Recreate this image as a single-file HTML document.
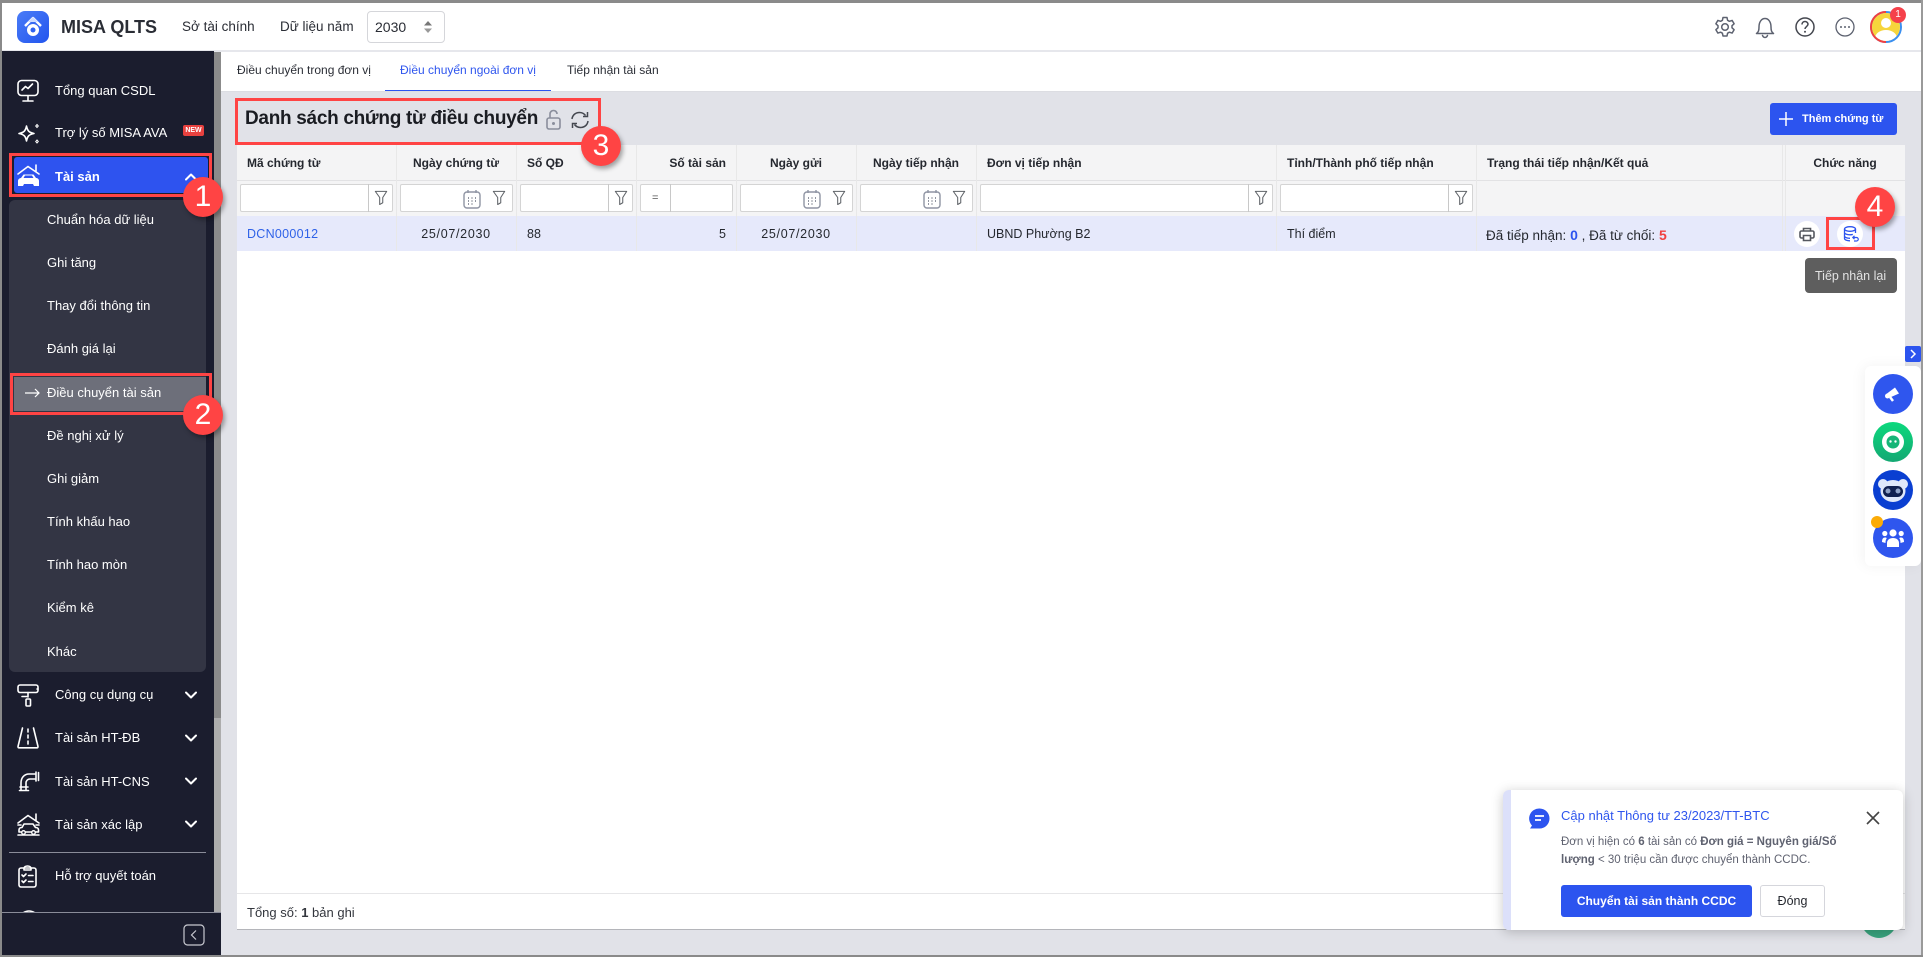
<!DOCTYPE html>
<html lang="vi"><head><meta charset="utf-8"><title>MISA QLTS</title>
<style>
html,body{margin:0;padding:0}
body{width:1923px;height:957px;position:relative;overflow:hidden;background:#e1e2e8;font-family:"Liberation Sans",sans-serif;font-size:13px;color:#1f2229}
.a{position:absolute}
.t{position:absolute;white-space:nowrap;line-height:20px;height:20px}
.r{background:#fff;position:absolute}
.m{color:#fff;font-size:13px;left:55px}
.s{color:#fff;font-size:13px;left:47px}
.h{font-weight:bold;font-size:12px;top:153px;color:#25282f}
.c{text-align:center;transform:translateX(-50%)}
.d{top:224px;font-size:12.5px;color:#25282f}
.in{position:absolute;top:184px;height:28px;background:#fff;border:1px solid #d4d4d4;box-sizing:border-box;border-radius:2px}
.dv{position:absolute;top:184px;height:28px;width:1px;background:#c8c8c8}
.v{position:absolute;top:145px;height:106px;width:1px;background:#e8e8e8}
.bd{position:absolute;width:40px;height:40px;border-radius:50%;background:#ff4444;color:#fff;font-size:30px;line-height:40px;text-align:center;box-shadow:2px 3px 5px rgba(0,0,0,.35);z-index:9}
.rb{position:absolute;border:3px solid #ff4444;box-sizing:border-box;z-index:8}
svg{position:absolute;overflow:visible}
.w{fill:none;stroke:#fff;stroke-width:1.6;stroke-linecap:round;stroke-linejoin:round}
.g{fill:none;stroke:#5d6270;stroke-width:1.5;stroke-linecap:round;stroke-linejoin:round}
</style></head><body>
<svg width="0" height="0" style="position:absolute"><defs>
<symbol id="fn" viewBox="0 0 16 18"><path d="M1.5 2h13L10 9v6l-3.500 2V9z" fill="none" stroke="#5f6368" stroke-width="1.200" stroke-linejoin="round"/></symbol>
<symbol id="cal" viewBox="0 0 18 20"><rect x="1" y="3" width="16" height="16" rx="3" fill="none" stroke="#8f94a3" stroke-width="1.400"/><path d="M5 1v3M13 1v3" stroke="#8f94a3" stroke-width="1.400"/><path d="M5 9h1M8.500 9h1M12 9h1M5 12h1M8.500 12h1M12 12h1M5 15h1M8.500 15h1" stroke="#6f7483" stroke-width="1.400"/></symbol>
<symbol id="chev" viewBox="0 0 12 8"><path d="M1 1.500L6 6.500L11 1.500" fill="none" stroke="#fff" stroke-width="2" stroke-linecap="round" stroke-linejoin="round"/></symbol>
</defs></svg>

<!-- frame -->
<div class="a" style="left:0;top:0;width:1923px;height:3px;background:#8a8a8a;z-index:20"></div>
<div class="a" style="left:0;top:0;width:2px;height:957px;background:#8a8a8a;z-index:20"></div>
<div class="a" style="left:1921px;top:0;width:2px;height:957px;background:#9a9a9a;z-index:20"></div>
<div class="a" style="left:0;top:955px;width:1923px;height:2px;background:#8a8a8a;z-index:20"></div>

<!-- header -->
<div class="r" style="left:2px;top:3px;width:1919px;height:48px"></div>
<div class="a" style="left:2px;top:50px;width:1919px;height:2px;background:#e6e7ec"></div>
<div class="a" style="left:17px;top:11px;width:32px;height:32px;border-radius:8px;background:linear-gradient(135deg,#4a7cf7,#2255ee)"></div>
<svg style="left:17px;top:11px" width="32" height="32" viewBox="0 0 32 32"><path d="M8 15l8-8 8 8" fill="none" stroke="#fff" stroke-width="2.400" stroke-linejoin="round"/><circle cx="16" cy="19" r="6" fill="#fff"/><circle cx="16" cy="19" r="2.500" fill="#2f62f0"/><path d="M11 11l5-5 5 5" fill="#cfdcff"/></svg>
<div class="t" style="left:61px;top:17px;font-size:18px;font-weight:bold;color:#2a2d35">MISA QLTS</div>
<div class="t" style="left:182px;top:17px;font-size:13.500px;color:#2a2d35">Sở tài chính</div>
<div class="t" style="left:280px;top:17px;font-size:13.500px;color:#2a2d35">Dữ liệu năm</div>
<div class="a" style="left:367px;top:11px;width:78px;height:32px;border:1px solid #d5d6da;border-radius:4px;box-sizing:border-box;background:#fff"></div>
<div class="t" style="left:375px;top:17px;font-size:14px;color:#2a2d35">2030</div>
<svg style="left:423px;top:20px" width="10" height="14" viewBox="0 0 10 14"><path d="M1 5.500L5 1l4 4.500z" fill="#777"/><path d="M1 8.500L5 13l4-4.500z" fill="#999"/></svg>

<svg style="left:1714px;top:16px" width="22" height="22" viewBox="0 0 22 22"><path class="g" d="M9 1.500h4l.6 2.800 1.800 1 2.700-.9 2 3.400-2.100 1.900v2.100l2.100 1.900-2 3.400-2.700-.9-1.800 1-.6 2.800H9l-.6-2.800-1.800-1-2.700.9-2-3.400 2.100-1.900V9.700L1.900 7.800l2-3.400 2.700.9 1.800-1z"/><circle class="g" cx="11" cy="11" r="3.300"/></svg>
<svg style="left:1755px;top:15px" width="20" height="24" viewBox="0 0 20 24"><path class="g" d="M1.500 18.500c2-1.500 2.500-3 2.500-6.500 0-5 2.500-8.500 6-8.500s6 3.500 6 8.500c0 3.500.5 5 2.500 6.500z"/><path class="g" d="M7.500 20.500c.6 1.400 1.400 2 2.500 2s1.900-.6 2.500-2"/></svg>
<svg style="left:1795px;top:17px" width="20" height="20" viewBox="0 0 20 20"><circle cx="10" cy="10" r="9" fill="none" stroke="#44474f" stroke-width="1.500"/><path d="M7 7.500c0-1.800 1.400-3 3-3s3 1.200 3 2.800c0 2.200-3 2.400-3 4.700" fill="none" stroke="#44474f" stroke-width="1.500"/><circle cx="10" cy="14.800" r="1" fill="#44474f"/></svg>
<svg style="left:1835px;top:17px" width="20" height="20" viewBox="0 0 20 20"><circle cx="10" cy="10" r="9" fill="none" stroke="#5d6270" stroke-width="1.300"/><circle cx="6" cy="10" r="1" fill="#5d6270"/><circle cx="10" cy="10" r="1" fill="#5d6270"/><circle cx="14" cy="10" r="1" fill="#5d6270"/></svg>
<svg style="left:1870px;top:11px" width="32" height="32" viewBox="0 0 32 32"><defs><clipPath id="av"><circle cx="16" cy="16" r="14"/></clipPath></defs><circle cx="16" cy="16" r="15" fill="none" stroke="#3a8ff0" stroke-width="2"/><path d="M16 1A15 15 0 0 0 16 31" fill="none" stroke="#f04040" stroke-width="2"/><circle cx="16" cy="16" r="14" fill="#f6d53c"/><g clip-path="url(#av)"><circle cx="16" cy="12" r="5" fill="#fff"/><ellipse cx="16" cy="27" rx="11" ry="8" fill="#fff"/></g></svg>
<div class="a" style="left:1890px;top:7px;width:16px;height:16px;border-radius:50%;background:#f5404a;color:#fff;font-size:10px;line-height:16px;text-align:center;z-index:3">1</div>

<!-- tabs -->
<div class="r" style="left:221px;top:52px;width:1700px;height:40px"></div>
<div class="t" style="left:237px;top:60px;font-size:12px;color:#2a2d35">Điều chuyển trong đơn vị</div>
<div class="t" style="left:400px;top:60px;font-size:12px;color:#2f56ee">Điều chuyển ngoài đơn vị</div>
<div class="t" style="left:567px;top:60px;font-size:12px;color:#2a2d35">Tiếp nhận tài sản</div>
<div class="a" style="left:385px;top:90px;width:166px;height:2px;background:#2c54ef"></div>
<div class="a" style="left:221px;top:91px;width:1700px;height:1px;background:#dcdde2"></div>

<!-- title -->
<div class="t" style="left:245px;top:109px;font-size:19px;letter-spacing:-.3px;font-weight:bold;color:#1a1c22">Danh sách chứng từ điều chuyển</div>
<svg style="left:546px;top:109px" width="15" height="22" viewBox="0 0 15 22"><rect x="1" y="9" width="13" height="11" rx="2" fill="none" stroke="#8a8e9c" stroke-width="1.600"/><path d="M4 9V5c0-2 1.500-3.500 3.500-3.500S11 3 11 5" fill="none" stroke="#8a8e9c" stroke-width="1.600"/><circle cx="7.500" cy="14.500" r="1.500" fill="#8a8e9c"/></svg>
<svg style="left:570px;top:110px" width="20" height="20" viewBox="0 0 20 20"><path d="M2 9c.5-4 3.500-6.500 7.500-6.500 2.500 0 4.500 1 6 3M18 11c-.5 4-3.500 6.500-7.500 6.500-2.500 0-4.500-1-6-3" fill="none" stroke="#44474f" stroke-width="1.500"/><path d="M13 6.500h4.500V2" fill="none" stroke="#44474f" stroke-width="1.500"/><path d="M7 13.500H2.500V18" fill="none" stroke="#44474f" stroke-width="1.500"/></svg>
<div class="a" style="left:1770px;top:103px;width:127px;height:32px;background:#2c54ef;border-radius:3px"></div>
<svg style="left:1779px;top:112px" width="14" height="14" viewBox="0 0 14 14"><path d="M7 0v14M0 7h14" stroke="#fff" stroke-width="1.500"/></svg>
<div class="t" style="left:1802px;top:109px;font-size:11px;font-weight:bold;color:#fff">Thêm chứng từ</div>

<!-- table -->
<div class="r" style="left:237px;top:145px;width:1668px;height:748px"></div>
<div class="a" style="left:237px;top:145px;width:1668px;height:71px;background:#f4f4f5"></div>
<div class="a" style="left:237px;top:180px;width:1668px;height:1px;background:#e2e2e4"></div>
<div class="a" style="left:237px;top:216px;width:1668px;height:35px;background:#e6e9fb"></div>
<div class="v" style="left:396px"></div><div class="v" style="left:516px"></div><div class="v" style="left:636px"></div><div class="v" style="left:736px"></div><div class="v" style="left:856px"></div><div class="v" style="left:976px"></div><div class="v" style="left:1276px"></div><div class="v" style="left:1476px"></div><div class="v" style="left:1782px"></div><div class="v" style="left:1785px"></div>

<div class="t h" style="left:247px">Mã chứng từ</div>
<div class="t h c" style="left:456px">Ngày chứng từ</div>
<div class="t h" style="left:527px">Số QĐ</div>
<div class="t h" style="right:1197px">Số tài sản</div>
<div class="t h c" style="left:796px">Ngày gửi</div>
<div class="t h c" style="left:916px">Ngày tiếp nhận</div>
<div class="t h" style="left:987px">Đơn vị tiếp nhận</div>
<div class="t h" style="left:1287px">Tỉnh/Thành phố tiếp nhận</div>
<div class="t h" style="left:1487px">Trạng thái tiếp nhận/Kết quả</div>
<div class="t h c" style="left:1845px">Chức năng</div>

<div class="in" style="left:240px;width:153px"></div><div class="dv" style="left:368px"></div>
<div class="in" style="left:400px;width:113px"></div>
<div class="in" style="left:520px;width:113px"></div><div class="dv" style="left:608px"></div>
<div class="in" style="left:640px;width:93px"></div><div class="dv" style="left:670px"></div>
<div class="in" style="left:740px;width:113px"></div>
<div class="in" style="left:860px;width:113px"></div>
<div class="in" style="left:980px;width:293px"></div><div class="dv" style="left:1248px"></div>
<div class="in" style="left:1280px;width:193px"></div><div class="dv" style="left:1448px"></div>
<div class="t" style="left:652px;top:188px;font-size:11px;color:#555">=</div>
<svg style="left:374px;top:189px" width="14" height="17"><use href="#fn"/></svg>
<svg style="left:492px;top:189px" width="14" height="17"><use href="#fn"/></svg>
<svg style="left:614px;top:189px" width="14" height="17"><use href="#fn"/></svg>
<svg style="left:832px;top:189px" width="14" height="17"><use href="#fn"/></svg>
<svg style="left:952px;top:189px" width="14" height="17"><use href="#fn"/></svg>
<svg style="left:1254px;top:189px" width="14" height="17"><use href="#fn"/></svg>
<svg style="left:1454px;top:189px" width="14" height="17"><use href="#fn"/></svg>
<svg style="left:463px;top:189px" width="18" height="20"><use href="#cal"/></svg>
<svg style="left:803px;top:189px" width="18" height="20"><use href="#cal"/></svg>
<svg style="left:923px;top:189px" width="18" height="20"><use href="#cal"/></svg>

<div class="t d" style="left:247px;color:#2f62e8;letter-spacing:.28px">DCN000012</div>
<div class="t d c" style="left:456px;letter-spacing:.7px">25/07/2030</div>
<div class="t d" style="left:527px">88</div>
<div class="t d" style="right:1197px">5</div>
<div class="t d c" style="left:796px;letter-spacing:.7px">25/07/2030</div>
<div class="t d" style="left:987px">UBND Phường B2</div>
<div class="t d" style="left:1287px">Thí điểm</div>
<div class="t d" style="left:1486px;top:225px;font-size:13.500px">Đã tiếp nhận: <b style="color:#2c54ef;font-size:14px">0</b> , Đã từ chối: <b style="color:#f04040;font-size:14px">5</b></div>
<div class="a" style="left:1794px;top:221px;width:26px;height:26px;border-radius:50%;background:#fff"></div>
<div class="a" style="left:1837px;top:221px;width:26px;height:26px;border-radius:50%;background:#fff"></div>
<svg style="left:1799px;top:226px" width="16" height="16" viewBox="0 0 16 16"><path d="M4.500 5V2.500h7V5M4 12H2.500A1.500 1.500 0 0 1 1 10.500v-4A1.500 1.500 0 0 1 2.500 5h11A1.500 1.500 0 0 1 15 6.500v4a1.500 1.500 0 0 1-1.500 1.500H12" fill="none" stroke="#55585f" stroke-width="1.600"/><path d="M4.500 9.500h7v5h-7z" fill="none" stroke="#55585f" stroke-width="1.600"/></svg>
<svg style="left:1843px;top:226px" width="16" height="16" viewBox="0 0 16 16"><ellipse cx="7" cy="3" rx="5.500" ry="2.300" fill="none" stroke="#2c54ef" stroke-width="1.300"/><path d="M1.500 3v9.500c0 1.300 2.400 2.300 5.500 2.300M12.500 3v4M1.500 6.500c0 1.300 2.400 2.300 5.500 2.300 1 0 2-.1 2.800-.4M1.500 10c0 1.300 2.400 2.300 5.500 2.300" fill="none" stroke="#2c54ef" stroke-width="1.300"/><path d="M10 11.500h3.500a1.500 1.500 0 0 1 0 3.500H11M11.500 9.800L9.800 11.500l1.700 1.700" fill="none" stroke="#2c54ef" stroke-width="1.200"/></svg>
<div class="a" style="left:1805px;top:258px;width:92px;height:35px;background:#5e5e5e;border-radius:4px"></div>
<div class="t" style="left:1815px;top:266px;font-size:12.500px;color:#e2e2e2">Tiếp nhận lại</div>

<div class="a" style="left:237px;top:893px;width:1668px;height:1px;background:#e6e6e8"></div>
<div class="a" style="left:237px;top:929px;width:1668px;height:1px;background:#b4b5ba"></div>
<div class="r" style="left:237px;top:894px;width:1668px;height:35px"></div>
<div class="t" style="left:247px;top:903px;font-size:13px;color:#33363d">Tổng số: <b>1</b> bản ghi</div>

<!-- sidebar -->
<div class="a" style="left:2px;top:51px;width:212px;height:904px;background:#1b1d2e"></div>
<div class="a" style="left:214px;top:52px;width:7px;height:666px;background:#8b8b8b"></div>
<div class="a" style="left:214px;top:718px;width:7px;height:194px;background:#adadad"></div>
<div class="a" style="left:214px;top:912px;width:7px;height:43px;background:#1b1d2e"></div>
<div class="a" style="left:9px;top:200px;width:197px;height:472px;border-radius:6px;background:#333544"></div>
<div class="a" style="left:14px;top:157px;width:194px;height:36px;background:#2e53ef;border-radius:3px"></div>
<div class="a" style="left:14px;top:377px;width:192px;height:34px;background:#6d6f7a"></div>
<div class="a" style="left:9px;top:852px;width:197px;height:1px;background:#8a8c99"></div>

<svg style="left:17px;top:79px" width="22" height="24" viewBox="0 0 22 24"><rect class="w" x="1" y="1.500" width="20" height="15" rx="3.500"/><path class="w" d="M5 11l3.500-3.500 2.500 2 4.500-4.500M11 17v4M6 22h10"/></svg>
<svg style="left:17px;top:122px" width="26" height="24" viewBox="0 0 26 24"><path class="w" d="M9.500 4C10.500 9 12 10.500 17 11.500 12 12.500 10.500 14 9.500 19 8.500 14 7 12.500 2 11.500 7 10.500 8.500 9 9.500 4z"/><path d="M20 2.500l1.300 1.500-1.300 1.500-1.300-1.500zM20 18l1.300 1.500-1.300 1.500-1.300-1.500z" fill="none" stroke="#fff" stroke-width="1"/></svg>
<svg style="left:17px;top:164px" width="24" height="24" viewBox="0 0 24 24"><path class="w" d="M1 10L11 2.500 22 10M19 1v6"/><path d="M1 22v-5c0-2 2-3 3-3l2.500-3.500h10L19 14c1.500 0 3 1 3 3v5h-5l-1-2H7l-1 2z" fill="#fff"/><path d="M8 11.500h7l1.500 2.500h-10z" fill="#2e53ef"/></svg>
<svg style="left:17px;top:684px" width="22" height="24" viewBox="0 0 22 24"><rect class="w" x="1" y="1" width="20" height="7.500" rx="2"/><path class="w" d="M21 5h-1M11 8.500V13M5 12.500h6"/><rect class="w" x="9" y="15" width="4.500" height="7" rx="1"/></svg>
<svg style="left:17px;top:727px" width="22" height="22" viewBox="0 0 22 22"><path class="w" d="M5.500 1L1 19.500c0 .8.400 1.300 1 1.300h18c.600 0 1-.5 1-1.300L16.500 1M11 2v3M11 8v3M11 14v3"/></svg>
<svg style="left:18px;top:770px" width="22" height="22" viewBox="0 0 22 22"><path class="w" d="M3 20v-7c0-5 3-9 8-9h6M8 20v-7c0-2 1.500-4 4-4h5M18 2v9M20.500 2.500v8M1.500 20.500h9M2 17h8"/></svg>
<svg style="left:17px;top:813px" width="24" height="24" viewBox="0 0 24 24"><path class="w" d="M1 10L11 2.500 22 10M19 1v6M1 22h21M1 12h3M19 12h3"/><path class="w" d="M2 19v-2c0-1.500 1-2.500 3-2.500L7 11h9l2.500 3.500c2 0 3 1 3 2.500v2H2z"/><circle cx="6.500" cy="19.500" r="1.800" fill="#1b1d2e" stroke="#fff" stroke-width="1.300"/><circle cx="16.500" cy="19.500" r="1.800" fill="#1b1d2e" stroke="#fff" stroke-width="1.300"/></svg>
<svg style="left:18px;top:865px" width="20" height="23" viewBox="0 0 20 23"><rect class="w" x="1" y="3" width="17" height="19" rx="2"/><path class="w" d="M6 3.500c0-1.500 1.500-2.500 3.500-2.500s3.500 1 3.500 2.500V5H6zM4 10l1.500 1.500L8 9M4 16l1.500 1.500L8 15M10.500 10.500H15M10.500 16.500H15"/></svg>

<div class="t m" style="top:81px">Tổng quan CSDL</div>
<div class="t m" style="top:123px">Trợ lý số MISA AVA</div>
<div class="a" style="left:183px;top:125px;width:21px;height:11px;background:#e8413f;border-radius:2px;color:#fff;font-size:7px;font-weight:bold;line-height:11px;text-align:center">NEW</div>
<div class="t m" style="top:167px;font-weight:bold">Tài sản</div>
<svg style="left:185px;top:173px;transform:rotate(180deg)" width="12" height="8"><use href="#chev"/></svg>
<div class="t s" style="top:210px">Chuẩn hóa dữ liệu</div>
<div class="t s" style="top:253px">Ghi tăng</div>
<div class="t s" style="top:296px">Thay đổi thông tin</div>
<div class="t s" style="top:339px">Đánh giá lại</div>
<svg style="left:25px;top:387px" width="15" height="12" viewBox="0 0 15 12"><path d="M0 6h14M10 2l4 4-4 4" fill="none" stroke="#fff" stroke-width="1.200"/></svg>
<div class="t s" style="top:383px">Điều chuyển tài sản</div>
<div class="t s" style="top:426px">Đề nghị xử lý</div>
<div class="t s" style="top:469px">Ghi giảm</div>
<div class="t s" style="top:512px">Tính khấu hao</div>
<div class="t s" style="top:555px">Tính hao mòn</div>
<div class="t s" style="top:598px">Kiểm kê</div>
<div class="t s" style="top:642px">Khác</div>
<div class="t m" style="top:685px">Công cụ dụng cụ</div>
<svg style="left:185px;top:691px" width="12" height="8"><use href="#chev"/></svg>
<div class="t m" style="top:728px">Tài sản HT-ĐB</div>
<svg style="left:185px;top:734px" width="12" height="8"><use href="#chev"/></svg>
<div class="t m" style="top:772px">Tài sản HT-CNS</div>
<svg style="left:185px;top:777px" width="12" height="8"><use href="#chev"/></svg>
<div class="t m" style="top:815px">Tài sản xác lập</div>
<svg style="left:185px;top:820px" width="12" height="8"><use href="#chev"/></svg>
<div class="t m" style="top:866px">Hỗ trợ quyết toán</div>
<div class="a" style="left:2px;top:895px;width:212px;height:17px;overflow:hidden">
  <div class="t m" style="left:53px;top:13px">Công cụ CCDC-TSC</div>
  <svg style="left:16px;top:14px" width="24" height="10" viewBox="0 0 24 10"><path class="w" d="M1 8c3-4 6-6 10-6s7 2 10 6"/></svg>
</div>
<div class="a" style="left:2px;top:912px;width:219px;height:1px;background:#8a8c99"></div>
<svg style="left:183px;top:924px" width="22" height="22" viewBox="0 0 22 22"><rect x="1" y="1" width="20" height="20" rx="3.500" fill="none" stroke="#c8c9d0" stroke-width="1.200"/><path d="M13 6.500L8.500 11l4.500 4.500" fill="none" stroke="#c8c9d0" stroke-width="1.200"/></svg>

<!-- right panel -->
<div class="a" style="left:1905px;top:346px;width:16px;height:16px;background:#2c54ef;border-radius:2px"></div>
<svg style="left:1909px;top:349px" width="8" height="10" viewBox="0 0 8 10"><path d="M2 1l4 4-4 4" fill="none" stroke="#fff" stroke-width="1.500"/></svg>
<div class="a" style="left:1865px;top:366px;width:56px;height:200px;background:#fff;border-radius:6px;box-shadow:-2px 0 14px rgba(0,0,0,.05)"></div>
<div class="a" style="left:1873px;top:374px;width:40px;height:40px;border-radius:50%;background:#2f56ee"></div>
<svg style="left:1884px;top:385px" width="18" height="18" viewBox="0 0 18 18"><path d="M3 8.500L11 2.500l4 6-9 4z" fill="#fff"/><circle cx="3.500" cy="11" r="2.500" fill="#fff"/><path d="M6 12l3 4" stroke="#fff" stroke-width="2.500"/></svg>
<div class="a" style="left:1873px;top:422px;width:40px;height:40px;border-radius:50%;background:linear-gradient(#0cd97d,#14a873)"></div>
<svg style="left:1881px;top:430px" width="24" height="24" viewBox="0 0 24 24"><circle cx="12" cy="12" r="11" fill="#fff"/><circle cx="12" cy="12" r="6.500" fill="#16b577"/><circle cx="9.500" cy="11.500" r="1.200" fill="#fff"/><circle cx="14.500" cy="11.500" r="1.200" fill="#fff"/></svg>
<div class="a" style="left:1873px;top:470px;width:40px;height:40px;border-radius:50%;background:#0a3fd1"></div>
<svg style="left:1877px;top:478px" width="32" height="26" viewBox="0 0 32 26"><circle cx="6" cy="6" r="5" fill="#dfe8fa"/><circle cx="26" cy="6" r="5" fill="#dfe8fa"/><ellipse cx="16" cy="13" rx="12.500" ry="11" fill="#dfe8fa"/><rect x="6" y="8" width="20" height="11" rx="5.500" fill="#10204f"/><circle cx="11" cy="13" r="2.500" fill="#8fa3c8"/><circle cx="21" cy="13" r="2.500" fill="#8fa3c8"/></svg>
<div class="a" style="left:1873px;top:518px;width:40px;height:40px;border-radius:50%;background:#2f56ee"></div>
<svg style="left:1881px;top:528px" width="24" height="20" viewBox="0 0 24 20"><circle cx="12" cy="5" r="3.600" fill="#fff"/><circle cx="3.800" cy="5.500" r="2.600" fill="#fff"/><circle cx="20.200" cy="5.500" r="2.600" fill="#fff"/><path d="M6 19v-4c0-3 2.500-5 6-5s6 2 6 5v4z" fill="#fff"/><path d="M1 14c0-3 1-4.500 3-4.500 .8 0 1.400 .2 1.800 .6C4.800 11.200 4.500 13 4.500 15z" fill="#fff"/><path d="M23 14c0-3-1-4.500-3-4.500-.8 0-1.400 .2-1.800 .6 1 1.100 1.300 2.900 1.300 4.900z" fill="#fff"/></svg>
<div class="a" style="left:1871px;top:516px;width:12px;height:12px;border-radius:50%;background:#fbab07"></div>

<!-- toast -->
<div class="a" style="left:1859px;top:890px;width:40px;height:48px;border-radius:50%;background:#3aa57f"></div>
<div class="a" style="left:1503px;top:790px;width:400px;height:140px;background:#fff;border-radius:6px;box-shadow:0 2px 12px rgba(0,0,0,.22);overflow:hidden;z-index:5"><div style="position:absolute;left:0;top:0;width:8px;height:140px;background:#dce0fa"></div></div>
<div style="position:absolute;left:0;top:0;z-index:6">
<svg style="left:1529px;top:808px" width="21" height="21" viewBox="0 0 21 21"><path d="M10.500 0.500a10 10 0 1 1 0 20H1l2-3a10 10 0 0 1 7.500-17z" fill="#2c54ef"/><path d="M6 8h9M6 12h6" stroke="#fff" stroke-width="1.800"/></svg>
<div class="t" style="left:1561px;top:806px;font-size:13px;color:#2f56ee">Cập nhật Thông tư 23/2023/TT-BTC</div>
<div class="t" style="left:1561px;top:832px;font-size:11.500px;color:#5f6270">Đơn vị hiện có <b>6</b> tài sản có <b>Đơn giá = Nguyên giá/Số</b></div>
<div class="t" style="left:1561px;top:850px;font-size:11.500px;color:#5f6270"><b>lượng</b> &lt; 30 triệu cần được chuyển thành CCDC.</div>
<div class="a" style="left:1561px;top:885px;width:191px;height:32px;background:#2c54ef;border-radius:3px;color:#fff;font-weight:bold;font-size:12px;line-height:32px;text-align:center">Chuyển tài sản thành CCDC</div>
<div class="a" style="left:1760px;top:885px;width:65px;height:32px;background:#fff;border:1px solid #d5d6dc;border-radius:3px;box-sizing:border-box;color:#25282f;font-size:12.500px;line-height:30px;text-align:center">Đóng</div>
<svg style="left:1866px;top:811px" width="14" height="14" viewBox="0 0 14 14"><path d="M1 1l12 12M13 1L1 13" stroke="#444" stroke-width="1.600"/></svg>
</div>

<!-- annotations -->
<div class="rb" style="left:9px;top:153px;width:203px;height:44px"></div>
<div class="rb" style="left:10px;top:373px;width:202px;height:42px"></div>
<div class="rb" style="left:235px;top:98px;width:366px;height:47px"></div>
<div class="rb" style="left:1826px;top:217px;width:49px;height:33px"></div>
<div class="bd" style="left:183px;top:177px">1</div>
<div class="bd" style="left:183px;top:395px">2</div>
<div class="bd" style="left:581px;top:126px">3</div>
<div class="bd" style="left:1855px;top:187px">4</div>
</body></html>
